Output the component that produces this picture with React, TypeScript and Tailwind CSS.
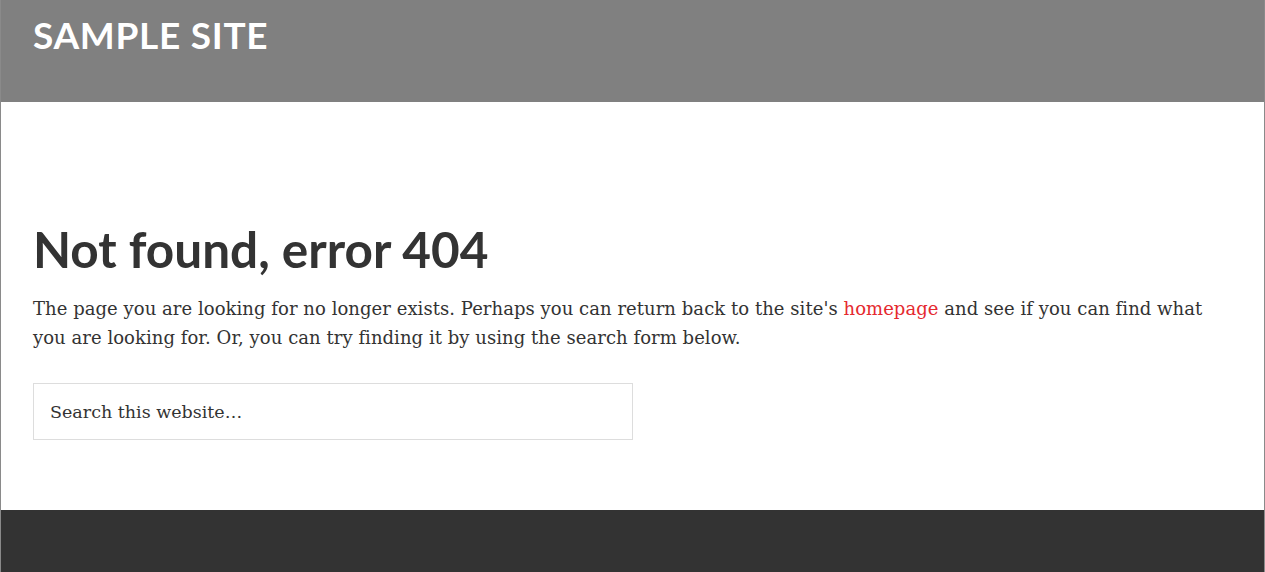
import React from 'react';

const App: React.FC = () => {
  return (
    <div className="min-h-[572px] bg-white border-x border-[#8a8a8a] font-['DejaVu_Serif',serif]">
      <header className="h-[102px] bg-[#808080] px-8 pt-[14px]">
        <h1 className="font-['Lato',sans-serif] text-[37px] font-bold leading-[42px] uppercase text-white tracking-[0.7px]">
          Sample Site
        </h1>
      </header>

      <main className="px-8 pt-[117px] pb-[70px]">
        <h2 className="font-['Lato',sans-serif] text-[49.5px] font-bold leading-[60px] text-[#333333] mb-[15px]">
          Not found, error 404
        </h2>
        <p className="text-[18px] leading-[29px] text-[#333333] max-w-[1180px] tracking-[0.05px]">
          The page you are looking for no longer exists. Perhaps you can return back to the site's{' '}
          <a href="#" className="text-[#e5292f]">homepage</a> and see if you can find what you are looking for. Or, you can try
          finding it by using the search form below.
        </p>

        <form className="mt-[31px]" onSubmit={(e) => e.preventDefault()}>
          <input
            type="search"
            placeholder="Search this website…"
            className="w-[600px] h-[57px] border border-[#dddddd] px-4 text-[17.5px] text-[#333333] placeholder:text-[#333333] outline-none font-['DejaVu_Serif',serif]"
          />
        </form>
      </main>

      <footer className="h-[62px] bg-[#333333]" />
    </div>
  );
};

export default App;
